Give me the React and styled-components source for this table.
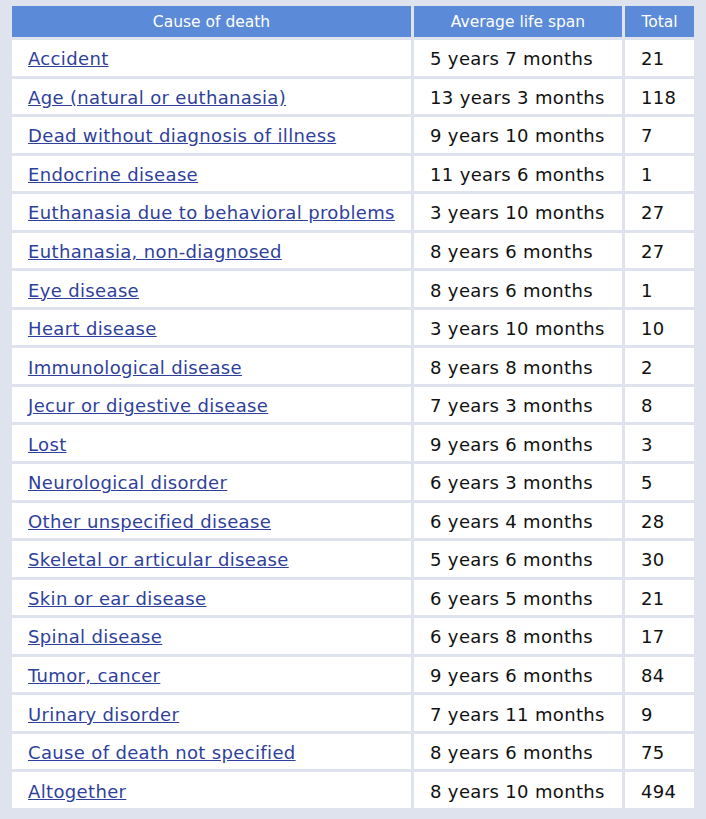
import React from "react";
import styled, { createGlobalStyle } from "styled-components";

const rows = [
  ["Accident", "5 years 7 months", "21"],
  ["Age (natural or euthanasia)", "13 years 3 months", "118"],
  ["Dead without diagnosis of illness", "9 years 10 months", "7"],
  ["Endocrine disease", "11 years 6 months", "1"],
  ["Euthanasia due to behavioral problems", "3 years 10 months", "27"],
  ["Euthanasia, non-diagnosed", "8 years 6 months", "27"],
  ["Eye disease", "8 years 6 months", "1"],
  ["Heart disease", "3 years 10 months", "10"],
  ["Immunological disease", "8 years 8 months", "2"],
  ["Jecur or digestive disease", "7 years 3 months", "8"],
  ["Lost", "9 years 6 months", "3"],
  ["Neurological disorder", "6 years 3 months", "5"],
  ["Other unspecified disease", "6 years 4 months", "28"],
  ["Skeletal or articular disease", "5 years 6 months", "30"],
  ["Skin or ear disease", "6 years 5 months", "21"],
  ["Spinal disease", "6 years 8 months", "17"],
  ["Tumor, cancer", "9 years 6 months", "84"],
  ["Urinary disorder", "7 years 11 months", "9"],
  ["Cause of death not specified", "8 years 6 months", "75"],
  ["Altogether", "8 years 10 months", "494"],
];

const GlobalStyle = createGlobalStyle`
  html, body {
    margin: 0;
    padding: 0;
    background: #dfe3ee;
  }
`;

const Page = styled.div`
  padding: 3px 9px 8px 9px;
  font-family: "DejaVu Sans", Verdana, sans-serif;
`;

const Table = styled.table`
  width: 688px;
  border-collapse: separate;
  border-spacing: 3px;
`;

const Head = styled.th`
  background: #5b8ad8;
  color: #ffffff;
  font-weight: normal;
  font-size: 15.5px;
  height: 31px;
  padding: 0;
  text-align: center;
  width: ${(p) => p.$w};
`;

const Cell = styled.td`
  background: #ffffff;
  color: #111111;
  font-size: 18px;
  letter-spacing: 0.35px;
  height: 35.55px;
  padding: 2px 0 0 16px;
  box-sizing: border-box;
  white-space: nowrap;
`;

const CauseLink = styled.a`
  color: #2f3f9c;
  text-decoration: underline;
  cursor: pointer;
`;

const App = () => {
  return (
    <>
      <GlobalStyle />
      <Page>
        <Table>
          <thead>
            <tr>
              <Head $w="399px">Cause of death</Head>
              <Head $w="208px">Average life span</Head>
              <Head $w="69px">Total</Head>
            </tr>
          </thead>
          <tbody>
            {rows.map(([cause, span, total]) => (
              <tr key={cause}>
                <Cell>
                  <CauseLink href="#">{cause}</CauseLink>
                </Cell>
                <Cell>{span}</Cell>
                <Cell>{total}</Cell>
              </tr>
            ))}
          </tbody>
        </Table>
      </Page>
    </>
  );
};

export default App;
